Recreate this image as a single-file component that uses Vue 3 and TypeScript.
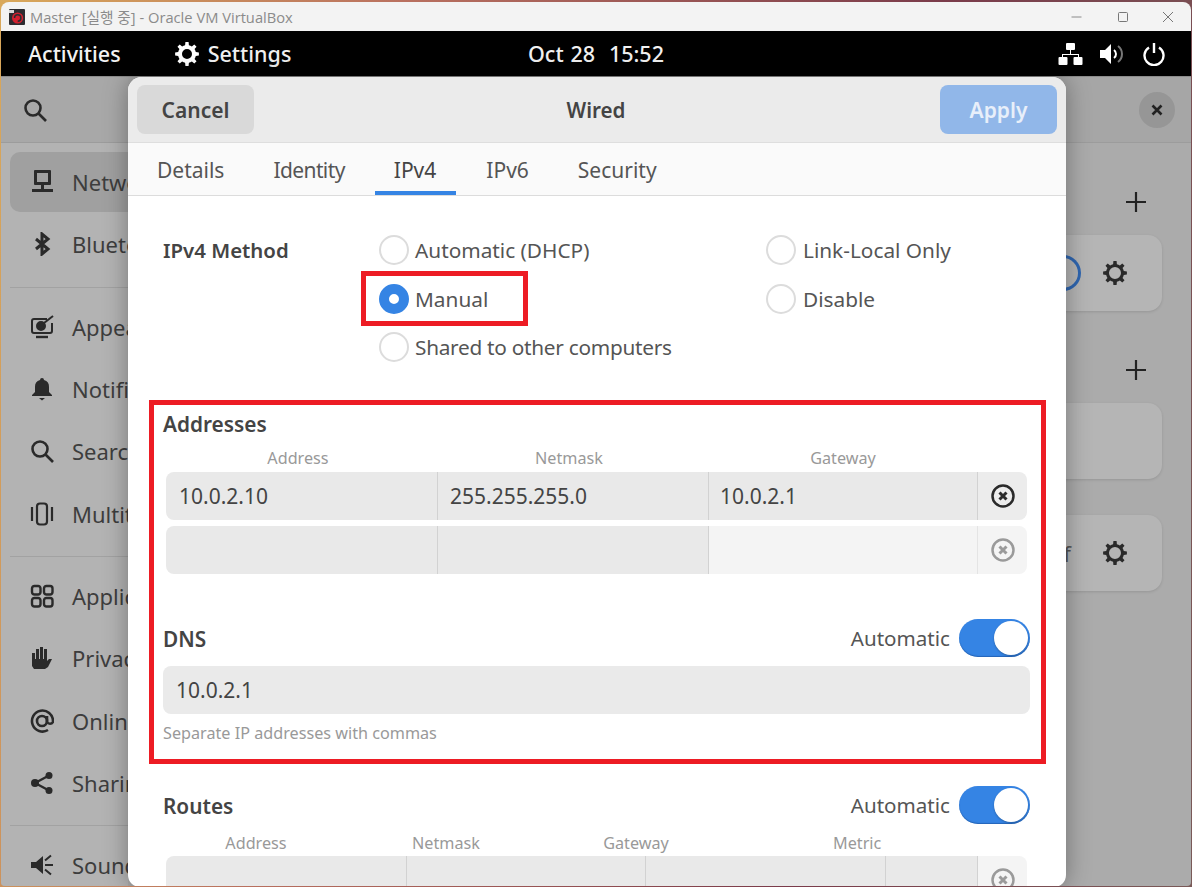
<script setup lang="ts">
function gear(teeth: number, ro: number, ri: number, hole: number): string {
  const c = 12
  let d = ''
  const step = (Math.PI * 2) / teeth
  for (let i = 0; i < teeth; i++) {
    const a = i * step
    const pts: [number, number][] = [
      [ri, a - step * 0.5],
      [ri, a - step * 0.27],
      [ro, a - step * 0.17],
      [ro, a + step * 0.17],
      [ri, a + step * 0.27],
    ]
    for (const [r, t] of pts) {
      d += (d ? 'L' : 'M') + (c + r * Math.cos(t)).toFixed(2) + ' ' + (c + r * Math.sin(t)).toFixed(2)
    }
  }
  d += `Z M${c - hole} ${c}a${hole} ${hole} 0 1 0 ${hole * 2} 0a${hole} ${hole} 0 1 0 ${-hole * 2} 0Z`
  return d
}
const gearD = gear(8, 12, 9, 5)
const cardGearD = gear(8, 12, 9, 6)

type Row = { label: string; icon: string; active?: boolean }
const navGroups: Row[][] = [
  [
    { label: 'Network', icon: 'network', active: true },
    { label: 'Bluetooth', icon: 'bluetooth' },
  ],
  [
    { label: 'Appearance', icon: 'appearance' },
    { label: 'Notifications', icon: 'bell' },
    { label: 'Search', icon: 'search' },
    { label: 'Multitasking', icon: 'multi' },
  ],
  [
    { label: 'Applications', icon: 'apps' },
    { label: 'Privacy', icon: 'hand' },
    { label: 'Online Accounts', icon: 'at' },
    { label: 'Sharing', icon: 'share' },
  ],
  [{ label: 'Sound', icon: 'sound' }],
]
const tabs = ['Details', 'Identity', 'IPv4', 'IPv6', 'Security']
</script>

<template>
  <div class="screen">
    <div class="window">
      <div class="titlebar">
        <svg class="vbox" viewBox="0 0 16 16" width="16" height="16">
          <rect width="16" height="16" rx="1" fill="#2c2c30" />
          <path d="M0 4h5V1H0z" fill="#d8d8d8" />
          <circle cx="8.6" cy="9" r="5.6" fill="#d3202f" />
          <path d="M5.5 9a3.2 3.2 0 1 1 3.2 3.2" fill="none" stroke="#2c2c30" stroke-width="1.5" />
        </svg>
        <span class="title">Master [실행 중] - Oracle VM VirtualBox</span>
        <div class="winctl">
          <svg viewBox="0 0 12 12" width="12" height="12"><path d="M0.5 6h10" stroke="#8a8a8a" fill="none" /></svg>
          <svg viewBox="0 0 12 12" width="12" height="12"><rect x="1.5" y="1.5" width="9" height="9" rx="1" stroke="#777" fill="none" /></svg>
          <svg viewBox="0 0 12 12" width="12" height="12"><path d="M1 1l10 10M11 1L1 11" stroke="#777" fill="none" /></svg>
        </div>
      </div>

      <div class="topbar">
        <span class="activities">Activities</span>
        <span class="app">
          <svg viewBox="0 0 24 24" width="24" height="24"><path :d="gearD" fill="#fff" fill-rule="evenodd" /></svg>
          Settings
        </span>
        <span class="clock">Oct 28&nbsp;&nbsp;15:52</span>
        <div class="tray">
          <svg viewBox="0 0 25 24" width="25" height="24" fill="#fff">
            <rect x="8" y="1" width="9" height="7" rx="1" />
            <path d="M12 8h1v4h8v3h-1v-2H5v2H4v-3h8z" />
            <rect x="0.5" y="15" width="9" height="8" rx="1" />
            <rect x="15.5" y="15" width="9" height="8" rx="1" />
          </svg>
          <svg viewBox="0 0 25 24" width="25" height="24">
            <path d="M0 8h5l6-6v20l-6-6H0z" fill="#fff" />
            <path d="M14 8a5 5 0 0 1 0 8" fill="none" stroke="#fff" stroke-width="2" />
            <path d="M18 4a10 10 0 0 1 0 16" fill="none" stroke="#777" stroke-width="2" />
          </svg>
          <svg viewBox="0 0 24 24" width="24" height="24" fill="none" stroke="#fff" stroke-width="2.4">
            <path d="M7 5.5a9.5 9.5 0 1 0 10 0" />
            <path d="M12 1v10" />
          </svg>
        </div>
      </div>

      <div class="app-body">
        <aside class="sidebar">
          <div class="side-head">
            <svg viewBox="0 0 24 24" width="24" height="24" fill="none" stroke="#2a2a2a" stroke-width="2.6">
              <circle cx="10" cy="10" r="7.5" />
              <path d="M15.5 15.5L23 23" />
            </svg>
          </div>
          <nav class="nav">
            <div v-for="(group, gi) in navGroups" :key="gi" class="group">
              <div v-for="item in group" :key="item.label" class="nav-row" :class="{ active: item.active }">
                <svg class="nav-icon" viewBox="0 0 24 24" width="24" height="24">
                  <g v-if="item.icon === 'network'" fill="#2a2a2a">
                    <path fill-rule="evenodd" d="M5 0h15a1 1 0 0 1 1 1v13a1 1 0 0 1-1 1h-6v4h9v3H2v-3h9v-4H5a1 1 0 0 1-1-1V1a1 1 0 0 1 1-1zm2 3v9h11V3z" />
                  </g>
                  <path v-else-if="item.icon === 'bluetooth'" d="M6 7l12 10-6 5V2l6 5L6 17" fill="none" stroke="#2a2a2a" stroke-width="3" />
                  <g v-else-if="item.icon === 'appearance'" fill="none" stroke="#2a2a2a" stroke-width="2">
                    <path d="M17 4H4a2 2 0 0 0-2 2v10a2 2 0 0 0 2 2h16a2 2 0 0 0 2-2V8" />
                    <circle cx="11" cy="11" r="4" fill="#2a2a2a" />
                    <path d="M14 8l9-7" />
                    <path d="M6 22h12" stroke-width="2.4" />
                  </g>
                  <g v-else-if="item.icon === 'bell'" fill="#2a2a2a">
                    <path d="M12 1a2 2 0 0 1 2 2 7 7 0 0 1 5 7v5l3 3v1H2v-1l3-3v-5a7 7 0 0 1 5-7 2 2 0 0 1 2-2z" />
                    <path d="M9 21h6l-3 2.5z" />
                  </g>
                  <g v-else-if="item.icon === 'search'" fill="none" stroke="#2a2a2a" stroke-width="2.6">
                    <circle cx="10" cy="10" r="7.5" />
                    <path d="M15.5 15.5L23 23" />
                  </g>
                  <g v-else-if="item.icon === 'multi'" fill="none" stroke="#2a2a2a" stroke-width="2.2">
                    <rect x="7" y="1.5" width="10" height="21" rx="3" />
                    <path d="M2 5v14M22 5v14" />
                  </g>
                  <g v-else-if="item.icon === 'apps'" fill="none" stroke="#2a2a2a" stroke-width="2.4">
                    <rect x="2" y="2" width="8.5" height="8.5" rx="2.4" />
                    <rect x="14" y="2" width="8.5" height="8.5" rx="2.4" />
                    <rect x="2" y="14" width="8.5" height="8.5" rx="2.4" />
                    <rect x="14" y="14" width="8.5" height="8.5" rx="2.4" />
                  </g>
                  <path v-else-if="item.icon === 'hand'" fill="#2a2a2a" d="M2 7h3v6h1V3h3v10h1V1h3v12h1V3h3v12l2-2h3l-4 8-3 2H4l-2-3z" />
                  <g v-else-if="item.icon === 'at'" fill="none" stroke="#2a2a2a" stroke-width="2.6">
                    <circle cx="12" cy="12" r="5" />
                    <path d="M17 7v6a3.4 3.4 0 0 0 6 0v-1a10.500 10.500 0 1 0-5 9" />
                  </g>
                  <g v-else-if="item.icon === 'share'" fill="#2a2a2a">
                    <circle cx="5" cy="12" r="4" />
                    <circle cx="19" cy="4.500" r="3.500" />
                    <circle cx="19" cy="19.500" r="3.500" />
                    <path d="M5 12L19 4.500M5 12l14 7.500" stroke="#2a2a2a" stroke-width="2.400" />
                  </g>
                  <g v-else fill="#2a2a2a">
                    <path d="M1 9h5l7-6v18l-7-6H1z" />
                    <path d="M15 12h8M15 7.500l6-5M15 16.500l6 5" stroke="#2a2a2a" stroke-width="2" />
                  </g>
                </svg>
                <span>{{ item.label }}</span>
              </div>
            </div>
          </nav>
        </aside>

        <main class="panel">
          <div class="panel-head">
            <span class="close-circle">
              <svg viewBox="0 0 12 12" width="12" height="12"><path d="M1.500 1.500l9 9M10.500 1.500l-9 9" stroke="#222" stroke-width="2.600" /></svg>
            </span>
          </div>
          <div class="panel-body">
            <div class="plus plus1"><svg viewBox="0 0 22 22" width="22" height="22"><path d="M11 1v20M1 11h20" stroke="#222" stroke-width="2.200" /></svg></div>
            <div class="card">
              <span class="mini-toggle"></span>
              <svg viewBox="0 0 24 24" width="24" height="24"><path :d="cardGearD" fill="#2a2a2a" fill-rule="evenodd" /></svg>
            </div>
            <div class="plus plus2"><svg viewBox="0 0 22 22" width="22" height="22"><path d="M11 1v20M1 11h20" stroke="#222" stroke-width="2.200" /></svg></div>
            <div class="card"></div>
            <div class="card card3">
              <span class="off">Off</span>
              <svg viewBox="0 0 24 24" width="24" height="24"><path :d="cardGearD" fill="#2a2a2a" fill-rule="evenodd" /></svg>
            </div>
          </div>
        </main>

        <section class="dialog">
          <header class="dlg-head">
            <button class="btn cancel">Cancel</button>
            <span class="dlg-title">Wired</span>
            <button class="btn apply">Apply</button>
          </header>
          <div class="tabs">
            <span v-for="t in tabs" :key="t" class="tab" :class="{ on: t === 'IPv4', narrow: t === 'Identity' }">{{ t }}</span>
          </div>
          <div class="dlg-content">
            <div class="method">
              <div class="m-label">IPv4 Method</div>
              <div class="m-col first">
                <label class="radio"><i class="dot"></i>Automatic (DHCP)</label>
                <label class="radio"><i class="dot sel"></i>Manual</label>
                <label class="radio tight"><i class="dot"></i>Shared to other computers</label>
              </div>
              <div class="m-col second-col">
                <label class="radio"><i class="dot"></i>Link-Local Only</label>
                <label class="radio"><i class="dot"></i>Disable</label>
              </div>
            </div>

            <h3 class="sec addr-h">Addresses</h3>
            <div class="cols addr-cols">
              <span>Address</span><span>Netmask</span><span>Gateway</span>
            </div>
            <div class="trow addr-row">
              <div class="cell">10.0.2.10</div>
              <div class="cell">255.255.255.0</div>
              <div class="cell">10.0.2.1</div>
              <div class="cell x">
                <svg viewBox="0 0 24 24" width="24" height="24" fill="none" stroke="#2a2a2a">
                  <circle cx="12" cy="12" r="10.500" stroke-width="2.500" />
                  <path d="M8.500 8.500l7 7M15.500 8.500l-7 7" stroke-width="3" />
                </svg>
              </div>
            </div>
            <div class="trow addr-row second">
              <div class="cell"></div>
              <div class="cell"></div>
              <div class="cell light"></div>
              <div class="cell x light">
                <svg viewBox="0 0 24 24" width="24" height="24" fill="none" stroke="#9a9a9a">
                  <circle cx="12" cy="12" r="10.500" stroke-width="2.500" />
                  <path d="M8.500 8.500l7 7M15.500 8.500l-7 7" stroke-width="3" />
                </svg>
              </div>
            </div>

            <div class="sec-row dns-row">
              <h3 class="sec">DNS</h3>
              <div class="auto">Automatic<span class="toggle"><i></i></span></div>
            </div>
            <div class="dns-input">10.0.2.1</div>
            <div class="hint">Separate IP addresses with commas</div>

            <div class="sec-row routes-row">
              <h3 class="sec">Routes</h3>
              <div class="auto">Automatic<span class="toggle"><i></i></span></div>
            </div>
            <div class="route-cols">
              <span>Address</span><span>Netmask</span><span>Gateway</span><span class="metric">Metric</span>
            </div>
            <div class="trow route-row">
              <div class="cell"></div>
              <div class="cell"></div>
              <div class="cell"></div>
              <div class="cell"></div>
              <div class="cell x light">
                <svg viewBox="0 0 24 24" width="24" height="24" fill="none" stroke="#9a9a9a">
                  <circle cx="12" cy="12" r="10.500" stroke-width="2.500" />
                  <path d="M8.500 8.500l7 7M15.500 8.500l-7 7" stroke-width="3" />
                </svg>
              </div>
            </div>
          </div>
          <div class="mark mark-manual"></div>
          <div class="mark mark-block"></div>
        </section>
      </div>
    </div>
  </div>
</template>

<style>
html, body { margin: 0; padding: 0; background: #8a5a50; }
</style>

<style scoped>
.screen {
  width: 1192px;
  height: 887px;
  overflow: hidden;
  box-sizing: border-box;
  padding: 2px 1px 1px 1px;
  background: linear-gradient(100deg, #d9a85a 0%, #b9705f 30%, #7a3b4a 70%, #7a5a58 100%);
  font-family: "Noto Sans", "Noto Sans CJK KR", sans-serif;
}
.window {
  height: 884px;
  display: flex;
  flex-direction: column;
  border-radius: 8px 8px 4px 4px;
  overflow: hidden;
  position: relative;
}
.titlebar {
  height: 29px;
  flex: none;
  background: #f3f3f3;
  display: flex;
  align-items: center;
  padding-left: 8px;
  color: #8b8b8b;
}
.vbox { margin-right: 5px; }
.title { font-size: 14.7px; font-family: "Open Sans", "Noto Sans CJK KR", sans-serif; }
.winctl {
  margin-left: auto;
  display: flex;
  gap: 33.5px;
  padding-right: 17px;
}
.topbar {
  height: 45px;
  flex: none;
  background: #000;
  color: #f2f2f2;
  display: flex;
  align-items: center;
  position: relative;
  font-size: 21.5px;
  font-weight: 500;
  padding-left: 27px;
}
.app {
  display: flex;
  align-items: center;
  gap: 9px;
  margin-left: 54px;
}
.clock { position: absolute; left: 527px; word-spacing: 1.3px; }
.tray {
  margin-left: auto;
  display: flex;
  align-items: center;
  gap: 17px;
  padding-right: 25px;
}
.app-body {
  flex: 1;
  position: relative;
  display: flex;
  min-height: 0;
  background: #ababab;
  border-top: 1px solid #8c8c8c;
}
.sidebar {
  width: 127px;
  flex: none;
  background: #b3b3b3;
  color: #3d3d3d;
  overflow: hidden;
}
.side-head {
  height: 66px;
  box-sizing: border-box;
  background: #a8a8a8;
  border-bottom: 1px solid #9c9c9c;
  display: flex;
  align-items: center;
  padding-left: 22px;
}
.nav { padding: 9px 0 0 9px; white-space: nowrap; }
.group + .group {
  margin-top: 12px;
  border-top: 1px solid #a2a2a2;
  padding-top: 9px;
}
.nav-row {
  height: 60.3px;
  margin-bottom: 2px;
  display: flex;
  align-items: center;
  font-size: 22px;
  border-radius: 10px 0 0 10px;
  padding-left: 20px;
  gap: 18px;
}
.nav-row.active { background: #a0a0a0; }
.nav-icon { flex: none; }
.panel { flex: 1; min-width: 0; }
.panel-head {
  height: 66px;
  box-sizing: border-box;
  background: #a6a6a6;
  border-bottom: 1px solid #9c9c9c;
  display: flex;
  align-items: center;
  justify-content: flex-end;
  padding-right: 16px;
}
.close-circle {
  width: 36px;
  height: 36px;
  border-radius: 50%;
  background: #969696;
  display: flex;
  align-items: center;
  justify-content: center;
}
.panel-body {
  padding: 0 29px 0 0;
  display: flex;
  flex-direction: column;
  align-items: flex-end;
}
.plus { display: flex; padding-right: 15px; }
.plus1 { margin-top: 48px; margin-bottom: 22px; }
.plus2 { margin-top: 48px; margin-bottom: 22px; }
.card {
  width: 500px;
  height: 76px;
  box-sizing: border-box;
  background: #b5b5b5;
  border-radius: 14px;
  box-shadow: 0 1px 3px rgba(0, 0, 0, 0.12);
  display: flex;
  align-items: center;
  justify-content: flex-end;
  padding-right: 34px;
}
.card svg { margin-right: 1px; }
.card + .card { margin-top: 36px; }
.mini-toggle {
  width: 30px;
  height: 36px;
  margin-right: 22px;
  border: 3px solid #2f66b0;
  border-left: none;
  border-radius: 0 18px 18px 0;
  box-sizing: border-box;
}
.off { font-size: 22px; color: #555; margin-right: 32px; }
.dialog {
  position: absolute;
  left: 127px;
  top: 0;
  width: 938px;
  height: 810px;
  background: #fff;
  border-radius: 14px 14px 12px 12px;
  overflow: hidden;
  box-shadow: 0 0 24px rgba(0, 0, 0, 0.35);
  display: flex;
  flex-direction: column;
  color: #444;
}
.dlg-head {
  height: 66px;
  flex: none;
  box-sizing: border-box;
  background: #ebebeb;
  border-bottom: 1px solid #dedede;
  display: flex;
  align-items: center;
  justify-content: space-between;
  padding: 0 9px;
}
.btn {
  height: 49px;
  width: 117px;
  border: none;
  border-radius: 8px;
  font: 600 21px "Noto Sans", sans-serif;
  padding: 0;
}
.cancel { background: #d9d9d9; color: #444; }
.apply { background: #91b7e9; color: #e8effa; }
.dlg-title { font-size: 20.6px; font-weight: 600; color: #444; margin-right: 2px; }
.tabs {
  height: 53px;
  flex: none;
  box-sizing: border-box;
  background: #fafafa;
  border-bottom: 1px solid #dcdcdc;
  display: flex;
  padding-left: 10.5px;
  gap: 0;
}
.tab {
  font-size: 21px;
  color: #555;
  padding: 0 18.5px;
  margin-right: 12px;
  line-height: 54px;
  height: 52px;
  box-sizing: border-box;
}
.tab.narrow { letter-spacing: -0.6px; }
.tab.on { border-bottom: 4px solid #3584e4; color: #444; padding-right: 19.5px; }
.dlg-content {
  padding: 30px 36px 0 35px;
  flex: 1;
  min-height: 0;
  overflow: hidden;
}
.method { display: flex; }
.m-label { width: 216px; flex: none; font-size: 20.4px; font-weight: 600; line-height: 49px; color: #444; }
.m-col { flex: none; }
.m-col.first { width: 387px; }
.second-col .radio { gap: 7px; }
.radio {
  display: flex;
  align-items: center;
  height: 48.5px;
  font-size: 20.8px;
  color: #555;
  gap: 6px;
  white-space: nowrap;
}
.radio.tight { letter-spacing: -0.28px; }
.dot {
  width: 30px;
  height: 30px;
  box-sizing: border-box;
  border: 2.5px solid #dcdcdc;
  border-radius: 50%;
  background: #fff;
  flex: none;
}
.dot.sel { border: 10px solid #3584e4; }
.sec { margin: 0; font-size: 20.8px; font-weight: 600; line-height: 24px; color: #444; }
.sec-row .sec { padding-top: 2px; }
.addr-h { margin-top: 40px; }
.cols {
  display: grid;
  margin: 0 3px;
  height: 20px;
  margin-top: 12px;
  font-size: 16.2px;
  line-height: 20px;
  color: #999;
  text-align: center;
}
.addr-cols { grid-template-columns: 264px 278px 270px 50px; }
.trow {
  display: grid;
  margin: 4px 3px 0;
  height: 48px;
  border-radius: 8px;
  overflow: hidden;
  font-size: 21px;
  color: #444;
}
.addr-row { grid-template-columns: 272px 271px 269px 49px; }
.addr-row .cell:nth-child(2) { padding-left: 12px; }
.addr-row .cell:nth-child(3) { padding-left: 11px; }
.second { margin-top: 6px; }
.cell {
  background: #e9e9e9;
  border-right: 1px solid #d2d2d2;
  line-height: 48px;
  padding-left: 13px;
  box-sizing: border-box;
  min-width: 0;
}
.cell:last-child { border-right: none; }
.cell.light { background: #f4f4f4; border-color: #e4e4e4; }
.cell.x {
  display: flex;
  align-items: center;
  justify-content: center;
  padding: 0;
  background: #ececec;
}
.cell.x.light { background: #f4f4f4; }
.sec-row {
  display: flex;
  align-items: center;
  justify-content: space-between;
  height: 38px;
}
.dns-row { margin-top: 45px; }
.routes-row { margin-top: 43px; }
.auto {
  display: flex;
  align-items: center;
  gap: 9px;
  font-size: 20.6px;
  color: #555;
}
.toggle {
  width: 71px;
  height: 38px;
  border-radius: 19px;
  background: #3584e4;
  box-shadow: inset 0 -1px 1px rgba(20, 70, 140, 0.5);
  position: relative;
  display: block;
}
.toggle i {
  position: absolute;
  right: 2px;
  top: 2px;
  width: 34px;
  height: 34px;
  border-radius: 50%;
  background: #fff;
  box-shadow: 0 1px 2px rgba(0, 0, 0, 0.25);
}
.dns-input {
  margin-top: 9px;
  height: 48px;
  border-radius: 8px;
  background: #eaeaea;
  line-height: 48px;
  padding-left: 13px;
  font-size: 21px;
  color: #444;
}
.hint { margin-top: 9px; font-size: 16.2px; line-height: 20px; color: #999; }
.route-cols {
  display: flex;
  margin: 9px 3px 0;
  height: 20px;
  font-size: 16.2px;
  line-height: 20px;
  color: #999;
  text-align: center;
}
.route-cols span { width: 180px; margin-right: 10px; flex: none; }
.route-cols .metric { margin-left: 97px; width: 48px; margin-right: 0; }
.route-row {
  margin-top: 3px;
  grid-template-columns: 241px 239px 240px 92px 49px;
}
.mark {
  position: absolute;
  box-sizing: border-box;
  border: 5px solid #ed1c24;
  pointer-events: none;
}
.mark-manual { left: 233px; top: 194px; width: 167px; height: 55px; }
.mark-block { left: 21px; top: 323px; width: 897px; height: 364px; }
</style>
